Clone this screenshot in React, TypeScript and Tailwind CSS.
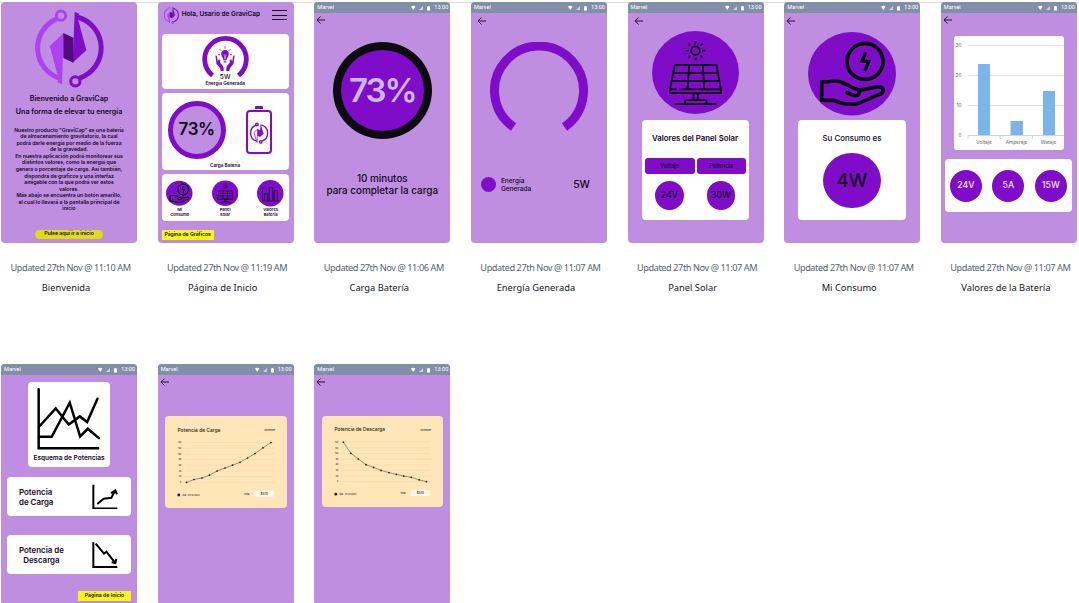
import React, { type ReactNode } from "react";

const welcomeLines = [
  'Nuestro producto "GraviCap" es una batería',
  "de almacenamiento gravitatorio, la cual",
  "podrá darle energía por medio de la fuerza",
  "de la gravedad.",
  "En nuestra aplicación podrá monitorear sus",
  "distintos valores, como la energía que",
  "genera o porcentaje de carga. Así también,",
  "dispondrá de graficos y una interfaz",
  "amigable con la que podrá ver estos",
  "valores.",
  "Más abajo se encuentra un botón amarillo,",
  "el cual lo llevará a la pantalla principal de",
  "inicio",
];

function Logo({ className }: { className: string }) {
  return (
    <svg viewBox="100 20 215 245" className={className} fill="none">
      <path d="M171 55.500A95.500 95.500 0 0 0 182 234.500" stroke="#ae42f3" strokeWidth="15" />
      <circle cx="184" cy="46" r="14" stroke="#ae42f3" strokeWidth="9" />
      <path d="M192 98L150 137L177 236L173 246L187 252Z" fill="#ae42f3" />
      <path d="M232 50A95.500 95.500 0 0 1 240 233" stroke="#7f0cc9" strokeWidth="15" />
      <circle cx="227" cy="243" r="14" stroke="#7f0cc9" strokeWidth="9" />
      <path d="M225 35L239 40L234 52L260 150L219 187Z" fill="#7f0cc9" />
      <path d="M191 98L221 112V187L191 173Z" fill="#520a7d" />
    </svg>
  );
}

function HandIcon({ className }: { className: string }) {
  return (
    <svg viewBox="84 96 264 250" className={className} fill="none" stroke="#060209" strokeWidth="11" strokeLinejoin="round" strokeLinecap="round">
      <ellipse cx="216" cy="221" rx="132" ry="125" fill="#7f0cc9" stroke="none" />
      <circle cx="255" cy="184" r="54" />
      <path d="M256 160L246 184H266L256 209" strokeWidth="10" strokeLinejoin="miter" />
      <path d="M125 245H146C166 240 186 245 199 253L216 262C226 267 242 268 237 281C232 290 224 287 201 278M237 271L288 261C304 256 317 268 305 280C301 283 295 283 290 286L242 307C221 315 202 314 181 308L162 301H125V245" />
    </svg>
  );
}

function SolarIcon({ className }: { className: string }) {
  return (
    <svg viewBox="96 92 262 250" className={className} fill="none" stroke="#060209" strokeWidth="5.500">
      <ellipse cx="227" cy="217" rx="131" ry="125" fill="#7f0cc9" stroke="none" />
      <circle cx="227" cy="151" r="13" />
      <path d="M227 122V130M227 172V180M198 151H207M247 151H257M206 130L211 136M248 130L242 136M206 172L211 167M248 172L242 167" />
      <path d="M165 194H290L304 269V279H150V269ZM158 219H296M154 243H300M152 268H170M179 268H302M208 194L203 268M249 194L253 268M221 280V299M234 280V299M196 311V300H260V311M164 312H290" />
    </svg>
  );
}

function BarsIcon({ className }: { className: string }) {
  return (
    <svg viewBox="0 0 26 26" className={className} fill="none" stroke="#2b0547" strokeWidth="1">
      <circle cx="13" cy="13" r="13" fill="#7f0cc9" stroke="none" />
      <path d="M5.500 7V20.500H22M7.500 20V13.500H10.500V20M12 20V7.500H15.500V20M17 20V10.500H20V20" />
    </svg>
  );
}

function IdeaIcon() {
  return (
    <svg viewBox="0 0 60 76" className="h-[25px] w-[20px]" fill="#7f0cc9">
      <path d="M30 12C21 12 17 20 19 27C20 34 25 35 25 43H35C35 35 40 34 41 27C43 20 39 12 30 12Z" />
      <path d="M26 46H34V50H26ZM29 0H31V8H29ZM9 25H15V28H9ZM45 25H51V28H45Z" />
      <path d="M14 10L18 14M46 10L42 14" stroke="#7f0cc9" strokeWidth="3" />
      <path d="M27 25L30 40L33 25" stroke="#fff" strokeWidth="1.500" fill="none" />
      <path d="M1 29Q5 27 6 33L8 47L11 40L16 43L15 50L24 61Q27 66 26 76H17L15 68L4 54ZM59 29Q55 27 54 33L52 47L49 40L44 43L45 50L36 61Q33 66 34 76H43L45 68L56 54Z" />
    </svg>
  );
}

function StatusBar() {
  return (
    <div className="flex h-[11px] shrink-0 items-center bg-[#8190a8] pr-[2px] pl-[3px] font-[Roboto,sans-serif] text-[5.600px] leading-none font-normal text-white">
      <span className="grow">Marvel</span>
      <svg viewBox="0 0 20 6" className="mr-[3px] h-[6px] w-[20px]" fill="#fff">
        <path d="M0 1.500Q2.250 0 4.500 1.500L2.250 5Z" />
        <path d="M12 1V5H8Z" opacity=".6" />
        <path d="M16 1.500H17V1H18V1.500H19V5.500H16Z" />
      </svg>
      <span>13:00</span>
    </div>
  );
}

function Back({ className }: { className: string }) {
  return (
    <svg viewBox="0 0 9 8" className={className} fill="none" stroke="#24132f" strokeWidth="1">
      <path d="M9 4H1M4.500 .5L1 4L4.500 7.500" />
    </svg>
  );
}

function Phone({ children, bar = true }: { children: ReactNode; bar?: boolean }) {
  return (
    <div className="flex h-[241px] w-[136px] shrink-0 flex-col overflow-hidden rounded-[4px] bg-[#c08ee0] font-[Inter,sans-serif] font-medium whitespace-nowrap text-[#12061c]">
      {bar && <StatusBar />}
      {children}
    </div>
  );
}

function Screen({ date, name, children }: { date: string; name: string; children: ReactNode }) {
  return (
    <div className="flex w-[136px] shrink-0 flex-col items-center">
      {children}
      <p className="mt-[17.500px] pl-[3px] text-[9.200px] leading-[14px] tracking-[-0.430px] whitespace-nowrap text-[#5b6270]">Updated 27th Nov @ {date} AM</p>
      <p className="mt-[6px] pr-[6px] text-[9.300px] leading-[14px] whitespace-nowrap text-[#15181d]">{name}</p>
    </div>
  );
}

function Welcome() {
  return (
    <Phone bar={false}>
      <div className="flex flex-col items-center">
        <Logo className="mt-[4.700px] h-[81.700px] w-[71.700px]" />
        <p className="mt-[4.500px] text-[7.200px] leading-[12px] font-semibold">Bienvenido a GraviCap</p>
        <p className="mt-[1.500px] text-[7.200px] leading-[12px] font-semibold">Una forma de elevar tu energía</p>
        <div className="mt-[8.200px] text-center text-[5.150px] leading-[6.560px] font-semibold">
          {welcomeLines.map((l) => (
            <p key={l}>{l}</p>
          ))}
        </div>
        <div className="mt-[18px] flex h-[9px] w-[68px] items-center justify-center rounded-full bg-[#e2dc17] text-[5.200px] font-semibold">Pulse aquí ir a inicio</div>
      </div>
    </Phone>
  );
}

function Shortcut({ icon, a, b }: { icon: ReactNode; a: string; b: string }) {
  return (
    <div className="flex w-[27px] flex-col items-center text-center text-[4.100px] leading-[5px] font-semibold">
      {icon}
      <p>{a}</p>
      <p>{b}</p>
    </div>
  );
}

function Home() {
  return (
    <Phone bar={false}>
      <div className="flex h-[32px] items-center pr-[7px] pb-[6px] pl-[5px]">
        <Logo className="h-[18px] w-[16.500px]" />
        <p className="ml-[2.500px] grow text-[6.500px] font-semibold">Hola, Usario de GraviCap</p>
        <div className="flex h-[10px] w-[15px] flex-col justify-between">
          <div className="h-px bg-[#1d0b2b]" />
          <div className="h-px bg-[#1d0b2b]" />
          <div className="h-px bg-[#1d0b2b]" />
        </div>
      </div>
      <div className="ml-[4px] flex w-[127px] flex-col gap-[4px]">
        <div className="flex h-[55px] flex-col items-center rounded-[4px] bg-white pt-[2px]">
          <div className="grid h-[44px] w-[47px] justify-items-center">
            <svg viewBox="0 0 47 44" className="col-start-1 row-start-1 h-[44px] w-[47px]" fill="none">
              <path d="M10.500 39.500A20.800 20.800 0 1 1 36.500 39.500" stroke="#7f0cc9" strokeWidth="4.800" />
            </svg>
            <div className="col-start-1 row-start-1 flex flex-col items-center pt-[10px]">
              <IdeaIcon />
              <p className="mt-[1.500px] text-[6.500px] leading-[8px]">5W</p>
            </div>
          </div>
          <p className="mt-px text-[4.600px] leading-[6px] font-semibold">Energía Generada</p>
        </div>
        <div className="flex h-[77px] flex-col items-center rounded-[4px] bg-white">
          <div className="mt-[8px] flex w-full items-center pl-[6px]">
            <div className="flex h-[58px] w-[58px] items-center justify-center rounded-full border-[5px] border-[#7f0cc9] bg-[#c08ee0] text-[17px] font-semibold tracking-[-0.400px]">73%</div>
            <svg viewBox="0 0 26 48" className="ml-[20px] h-[48px] w-[26px]" fill="none">
              <path d="M9 3V1Q9 0 10 0H16Q17 0 17 1V3Z" fill="#7f0cc9" />
              <rect x="1" y="5" width="24" height="42" rx="3" stroke="#7f0cc9" strokeWidth="2" />
              <svg x="3.500" y="15" width="19" height="24" viewBox="100 20 215 245" fill="none" stroke="#7f0cc9" strokeWidth="16">
                <path d="M171 55A96 96 0 0 0 180 235M232 50A96 96 0 0 1 241 234" />
                <circle cx="184" cy="46" r="14" />
                <circle cx="227" cy="243" r="14" />
                <path d="M191 98L150 137L187 252Z" strokeWidth="8" />
                <path d="M191 98L221 112L225 35L260 150L219 187L191 173Z" fill="#7f0cc9" stroke="none" />
              </svg>
            </svg>
          </div>
          <p className="mt-[4px] text-[4.600px] leading-[6px] font-semibold">Carga Batería</p>
        </div>
        <div className="flex h-[46.500px] justify-between rounded-[4px] bg-white px-[4.500px] pt-[6px]">
          <Shortcut icon={<HandIcon className="h-[26.500px] w-[26.500px]" />} a="Mi" b="Consumo" />
          <Shortcut icon={<SolarIcon className="h-[26.500px] w-[26.500px]" />} a="Panel" b="Solar" />
          <Shortcut icon={<BarsIcon className="h-[26.500px] w-[26.500px]" />} a="Valores" b="Batería" />
        </div>
      </div>
      <div className="mt-[9.500px] ml-[4px] flex h-[10px] w-[52px] items-center justify-center bg-[#fbf512] text-[5.100px] font-semibold">Página de Gráficos</div>
    </Phone>
  );
}

function Charge() {
  return (
    <Phone>
      <Back className="mt-[3px] ml-[2px] h-[8px] w-[9px]" />
      <div className="flex flex-col items-center">
        <div className="mt-[18px] flex h-[97px] w-[99px] items-center justify-center rounded-[50%] border-[8px] border-[#0b0b10] bg-[#7f0cc9] text-[33px] font-semibold tracking-[-2px] text-[#c9b9e6]">73%</div>
        <p className="mt-[32.500px] text-[9.900px] leading-[12.300px]">10 minutos</p>
        <p className="text-[9.900px] leading-[12.300px]">para completar la carga</p>
      </div>
    </Phone>
  );
}

function Energy() {
  return (
    <Phone>
      <Back className="mt-[4px] ml-[6px] h-[8px] w-[9px]" />
      <svg viewBox="0 0 98 90" className="mt-[17px] ml-[19px] h-[90px] w-[98px]" fill="none">
        <path d="M23.500 85A44.500 44.500 0 1 1 74.500 85" stroke="#7f0cc9" strokeWidth="9" />
      </svg>
      <div className="mt-[44.500px] flex items-center pr-[17px] pl-[10px]">
        <div className="h-[15px] w-[15px] rounded-full bg-[#7f0cc9]" />
        <div className="ml-[5px] grow text-[6.500px] leading-[8px]">
          <p>Energía</p>
          <p>Generada</p>
        </div>
        <p className="text-[10.300px]">5W</p>
      </div>
    </Phone>
  );
}

function Solar() {
  return (
    <Phone>
      <Back className="mt-[4px] ml-[6px] h-[8px] w-[9px]" />
      <SolarIcon className="mt-[6px] ml-[24px] h-[83px] w-[87px]" />
      <div className="mt-[6px] ml-[14px] flex h-[99.500px] w-[107px] flex-col items-center rounded-[4px] bg-white pt-[12px]">
        <p className="text-[7.800px] leading-[12px] font-semibold">Valores del Panel Solar</p>
        <div className="mt-[14px] flex gap-[2px] text-[5.800px]">
          <div className="flex h-[16px] w-[50px] items-center justify-center rounded-[3px] bg-[#7f0cc9]">Voltaje</div>
          <div className="flex h-[16px] w-[49px] items-center justify-center rounded-[3px] bg-[#7f0cc9]">Potencia</div>
        </div>
        <div className="mt-[7px] flex gap-[23px] text-[8.600px]">
          <div className="flex h-[29px] w-[28.500px] items-center justify-center rounded-full bg-[#7f0cc9]">24V</div>
          <div className="flex h-[29px] w-[28.500px] items-center justify-center rounded-full bg-[#7f0cc9]">30W</div>
        </div>
      </div>
    </Phone>
  );
}

function Consumption() {
  return (
    <Phone>
      <Back className="mt-[4px] ml-[2px] h-[8px] w-[9px]" />
      <HandIcon className="mt-[7px] ml-[24px] h-[83.500px] w-[88px]" />
      <div className="mt-[4.500px] ml-[14px] flex h-[99.500px] w-[107.500px] flex-col items-center rounded-[4px] bg-white pt-[11.500px]">
        <p className="text-[7.900px] leading-[12px]">Su Consumo es</p>
        <div className="mt-[9.500px] flex h-[55px] w-[57.500px] items-center justify-center rounded-[50%] bg-[#7f0cc9] text-[18.500px]">4W</div>
      </div>
    </Phone>
  );
}

function BatteryValues() {
  return (
    <Phone>
      <Back className="mt-[3px] ml-[2px] h-[8px] w-[9px]" />
      <svg viewBox="0 0 110 114" className="mt-[12px] ml-[13px] h-[114px] w-[110px] rounded-[3px] bg-white" fontSize="4.800" fontWeight="400" fill="#666">
        <path d="M14 9.500H110M14 39.500H110M14 69.500H110" stroke="#e2e2e6" />
        <path d="M14 103V99.500H110M46 99V103M78.500 99V103" stroke="#cbd3e4" fill="none" />
        <path d="M24 28H36V99H24ZM56.500 85H69V99H56.500ZM89 55H101V99H89Z" fill="#7cb5ec" />
        <g textAnchor="end">
          <text x="7.500" y="11">30</text>
          <text x="7.500" y="41">20</text>
          <text x="7.500" y="71">10</text>
          <text x="7.500" y="100.500">0</text>
        </g>
        <g textAnchor="middle">
          <text x="30" y="107.500">Voltaje</text>
          <text x="62.500" y="107.500">Amperaje</text>
          <text x="94.500" y="107.500">Wataje</text>
        </g>
      </svg>
      <div className="mt-[9px] ml-[4px] flex h-[53px] w-[127px] items-center justify-between rounded-[4px] bg-white px-[5px] text-[8.700px] text-[#f3e6fb]">
        <div className="flex h-[32px] w-[32px] items-center justify-center rounded-full bg-[#7f0cc9]">24V</div>
        <div className="flex h-[32px] w-[32px] items-center justify-center rounded-full bg-[#7f0cc9]">5A</div>
        <div className="flex h-[32px] w-[32px] items-center justify-center rounded-full bg-[#7f0cc9]">15W</div>
      </div>
    </Phone>
  );
}

function Schemes() {
  return (
    <Phone>
      <div className="flex flex-col items-center">
        <div className="mt-[7px] flex h-[85px] w-[82.500px] flex-col items-center rounded-[4px] bg-white pt-[6px]">
          <svg viewBox="112 84 190 184" className="h-[61.500px] w-[63.500px]" fill="none" stroke="#000" strokeWidth="7.500" strokeLinecap="round">
            <path d="M117 88V264H295" />
            <path d="M118 200L168 145L207 193L240 169L262 186L293 116M118 230H156L210 128L241 229L264 206L297 234" />
          </svg>
          <p className="mt-[3px] text-[6.500px] leading-[10px] font-semibold">Esquema de Potencias</p>
        </div>
        <div className="mt-[10px] flex h-[39px] w-[124px] items-center justify-between rounded-[4px] bg-white pr-[13px] pl-[12px]">
          <div className="text-[7.900px] leading-[10px] font-semibold">
            <p>Potencia</p>
            <p>de Carga</p>
          </div>
          <svg viewBox="276 370 78 76" className="h-[25.500px] w-[26px]" fill="none" stroke="#000" strokeWidth="6">
            <path d="M280 372V443H352M292 430L311 414L334 411L345 390M333 397L346 389L351 401" />
          </svg>
        </div>
        <div className="mt-[19px] flex h-[39px] w-[124px] items-center justify-between rounded-[4px] bg-white pr-[13px] pl-[12px]">
          <div className="text-center text-[7.900px] leading-[10px] font-semibold">
            <p>Potencia de</p>
            <p>Descarga</p>
          </div>
          <svg viewBox="276 545 78 78" className="h-[26px] w-[26px]" fill="none" stroke="#000" strokeWidth="6">
            <path d="M280 546V620H352M287 550L312 580L319 574L345 607M349 596L346 608L335 606" />
          </svg>
        </div>
        <div className="mt-[17px] mr-[6px] flex h-[10px] w-[53px] items-center justify-center self-end bg-[#fbf512] text-[5.200px] font-semibold">Página de Inicio</div>
      </div>
    </Phone>
  );
}

function PowerChart({ title, points, total, className }: { title: string; points: number[][]; total: string; className: string }) {
  return (
    <svg viewBox="0 0 122 92" className={className} fill="#241a12" fontSize="1.900">
      <text x="12.500" y="15.500" fontSize="4.900">{title}</text>
      <text x="99.500" y="14.800" fontSize="2.200">Diciembre</text>
      {[140, 120, 100, 80, 60, 40, 20, 0].map((n, i) => (
        <g key={n}>
          <path d={`M20 ${26.5 + i * 5.7}H109.500`} stroke="#ead8b4" strokeWidth=".5" />
          <text x="16.200" y={27.2 + i * 5.7} textAnchor="end">{n}</text>
        </g>
      ))}
      <polyline points={points.map((p) => p.join(",")).join(" ")} fill="none" stroke="#3d3227" strokeWidth=".5" />
      {points.map(([x, y]) => (
        <circle key={x} cx={x} cy={y} r=".85" />
      ))}
      <circle cx="13.800" cy="79" r="1.400" />
      <text x="17.500" y="79.800" fontSize="2.200">Día - 01/12/2023</text>
      <text x="79" y="78.500" fontSize="2.300">Total</text>
      <rect x="89" y="74.500" width="20.500" height="6.500" rx="3.250" fill="#fff6e4" />
      <text x="99.300" y="79" fontSize="3" textAnchor="middle">{total}</text>
    </svg>
  );
}

const rising = [[21.5, 66.4], [29, 63.5], [37, 62], [44.5, 59.2], [52, 55], [60, 52], [67.5, 49.2], [75, 46.3], [82.5, 42], [90, 37.5], [98, 31.8], [106, 26.5]];
const falling = [[21.5, 26.5], [29, 37.7], [36.5, 43.5], [44.3, 49.2], [52, 52], [59.5, 55], [67.5, 57.2], [75, 59], [82.5, 60.7], [90, 62], [98, 64.5], [105.5, 66.4]];

export default function App() {
  return (
    <div className="h-[603px] w-[1079px] overflow-hidden bg-white font-['Noto_Sans',sans-serif]">
      <div className="h-[3px] border-b border-[#dcdcdf]" />
      <main className="relative -mt-px flex flex-col gap-[69.500px] pl-px">
        <div className="flex gap-[20.650px]">
          <Screen date="11:10" name="Bienvenida"><Welcome /></Screen>
          <Screen date="11:19" name="Página de Inicio"><Home /></Screen>
          <Screen date="11:06" name="Carga Batería"><Charge /></Screen>
          <Screen date="11:07" name="Energía Generada"><Energy /></Screen>
          <Screen date="11:07" name="Panel Solar"><Solar /></Screen>
          <Screen date="11:07" name="Mi Consumo"><Consumption /></Screen>
          <Screen date="11:07" name="Valores de la Batería"><BatteryValues /></Screen>
        </div>
        <div className="flex gap-[20.650px]">
          <Schemes />
          <Phone>
            <Back className="mt-[3px] ml-[2px] h-[8px] w-[9px]" />
            <PowerChart title="Potencia de Carga" points={rising} total="$570" className="mt-[30px] ml-[7px] h-[92px] w-[122px] rounded-[4px] bg-[#ffe5b8]" />
          </Phone>
          <Phone>
            <Back className="mt-[3px] ml-[2px] h-[8px] w-[9px]" />
            <PowerChart title="Potencia de Descarga" points={falling} total="$570" className="mt-[29.500px] ml-[7.500px] h-[91px] w-[121px] rounded-[4px] bg-[#ffe5b8]" />
          </Phone>
        </div>
      </main>
    </div>
  );
}
